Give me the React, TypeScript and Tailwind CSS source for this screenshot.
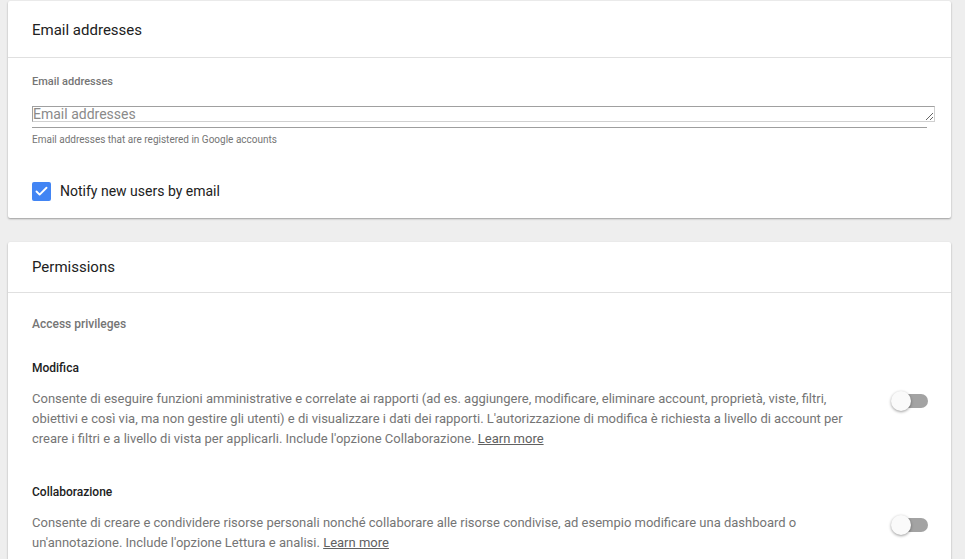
import { Check } from "lucide-react";

const font = { fontFamily: "Roboto, 'Liberation Sans', sans-serif" };

function Toggle() {
  return (
    <div className="relative w-[38px] h-[20px] shrink-0 flex items-center">
      <div className="ml-[2px] w-[35px] h-[14px] rounded-full bg-[#a3a3a3]" />
      <div className="absolute left-0 top-0 w-[20px] h-[20px] rounded-full bg-[#fafafa] shadow-[0_1px_3px_rgba(0,0,0,0.4)]" />
    </div>
  );
}

function Privilege({ title, children }: { title: string; children: React.ReactNode }) {
  return (
    <div className="flex flex-col">
      <div className="text-[12px] leading-[16px] font-medium text-[#212121]">{title}</div>
      <div className="flex items-start justify-between mt-[13px]">
        <p className="w-[820px] text-[13px] leading-[20px] text-[#757575]">{children}</p>
        <div className="mt-[2px] mr-[-2px]">
          <Toggle />
        </div>
      </div>
    </div>
  );
}

export default function App() {
  return (
    <div className="min-h-[559px] bg-[#eeeeee] pl-[8px] pr-[14px] pt-[1px]" style={font}>
      {/* email card */}
      <div className="bg-white rounded-[2px] shadow-[0_1px_2px_rgba(0,0,0,0.35)]">
        <div className="h-[57px] px-[24px] pt-[3px] flex items-center border-b border-[#e0e0e0] text-[15px] text-[#212121]">
          Email addresses
        </div>
        <div className="px-[24px] pt-[17px] pb-[16px]">
          <div className="text-[11px] leading-[14px] font-medium text-[#757575]">Email addresses</div>
          <div className="mt-[17px] border-b border-[#9e9e9e] pb-[5px]">
            <textarea
              rows={1}
              placeholder="Email addresses"
              className="block w-[903px] h-[16px] text-[14px] leading-[14px] border border-t-[#a0a0a0] border-l-[#a0a0a0] border-r-[#d0d0d0] border-b-[#d0d0d0] placeholder:text-[#8a8a8a] outline-none overflow-hidden p-0"
            />
          </div>
          <div className="mt-[6px] text-[10px] leading-[12px] text-[#757575]">
            Email addresses that are registered in Google accounts
          </div>
          <label className="mt-[35px] flex items-center gap-[9px]">
            <span className="w-[19px] h-[19px] rounded-[2px] bg-[#4285f4] flex items-center justify-center">
              <Check className="w-[15px] h-[15px] text-white" strokeWidth={3} />
            </span>
            <span className="text-[14px] text-[#212121]">Notify new users by email</span>
          </label>
        </div>
      </div>

      {/* permissions card */}
      <div className="mt-[24px] bg-white rounded-[2px] shadow-[0_1px_2px_rgba(0,0,0,0.35)]">
        <div className="h-[51px] px-[24px] pt-[1px] flex items-center border-b border-[#e0e0e0] text-[15px] text-[#212121]">
          Permissions
        </div>
        <div className="px-[24px] pt-[23px] pb-[12px] flex flex-col">
          <div className="text-[12px] leading-[16px] text-[#757575] font-medium">Access privileges</div>
          <div className="mt-[28px] flex flex-col gap-[35px]">
            <Privilege title="Modifica">
              Consente di eseguire funzioni amministrative e correlate ai rapporti (ad es. aggiungere, modificare, eliminare account, proprietà, viste, filtri, obiettivi e così via, ma non gestire gli utenti) e di visualizzare i dati dei rapporti. L'autorizzazione di modifica è richiesta a livello di account per creare i filtri e a livello di vista per applicarli. Include l'opzione Collaborazione.{" "}
              <a className="underline text-[#616161]">Learn more</a>
            </Privilege>
            <Privilege title="Collaborazione">
              Consente di creare e condividere risorse personali nonché collaborare alle risorse condivise, ad esempio modificare una dashboard o un'annotazione. Include l'opzione Lettura e analisi.{" "}
              <a className="underline text-[#616161]">Learn more</a>
            </Privilege>
          </div>
        </div>
      </div>
    </div>
  );
}
